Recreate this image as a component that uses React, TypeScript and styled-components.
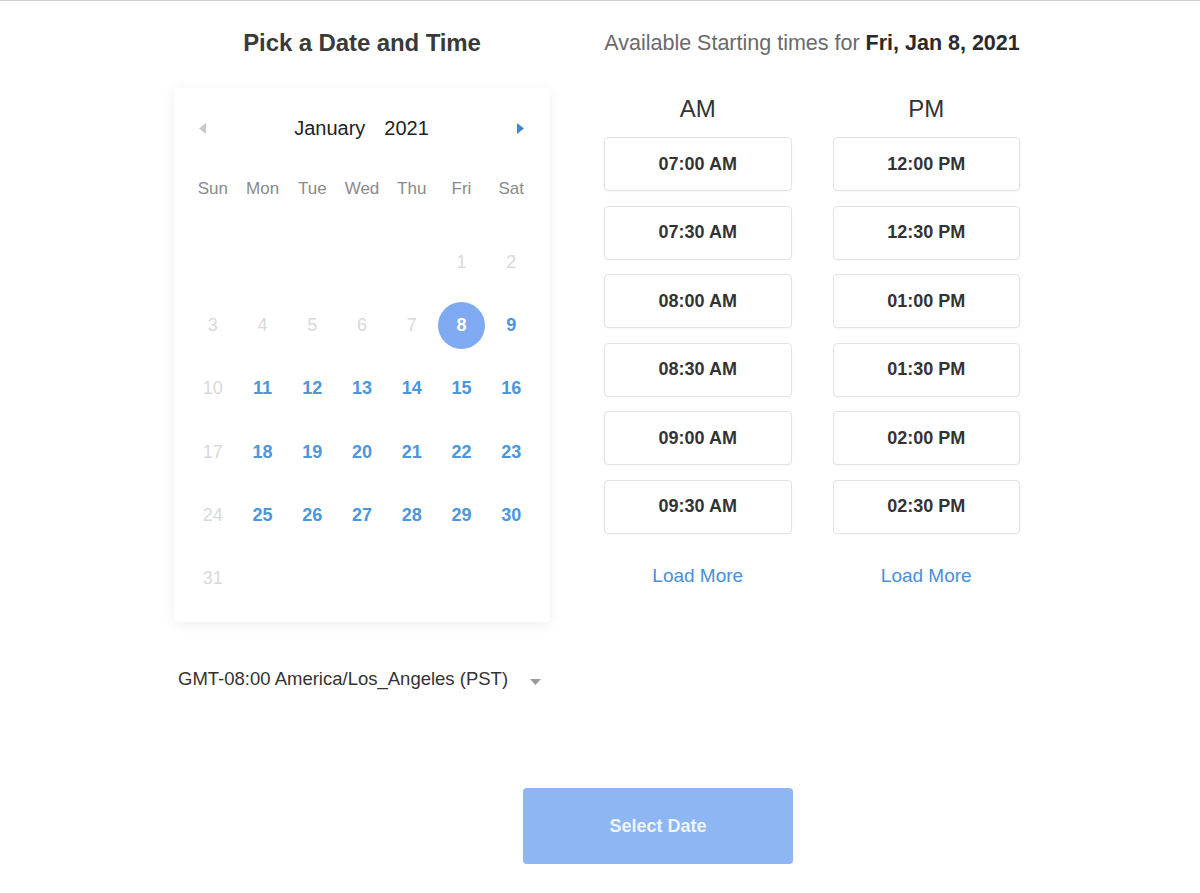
import React from "react";
import styled, { createGlobalStyle } from "styled-components";

const GlobalStyle = createGlobalStyle`
  body {
    margin: 0;
    background: #fff;
    font-family: "Liberation Sans", Arial, sans-serif;
  }
`;

const weekdays = ["Sun", "Mon", "Tue", "Wed", "Thu", "Fri", "Sat"];
const amSlots = ["07:00 AM", "07:30 AM", "08:00 AM", "08:30 AM", "09:00 AM", "09:30 AM"];
const pmSlots = ["12:00 PM", "12:30 PM", "01:00 PM", "01:30 PM", "02:00 PM", "02:30 PM"];

// Jan 2021 starts on a Friday
const leadingBlanks = 5;
const selectedDay = 8;

type DayState = "disabled" | "available" | "selected";

function dayState(day: number): DayState {
  if (day === selectedDay) return "selected";
  const weekday = (leadingBlanks + day - 1) % 7;
  if (day < selectedDay || weekday === 0) return "disabled";
  return "available";
}

export default function App() {
  const cells: (number | null)[] = [];
  for (let i = 0; i < leadingBlanks; i++) cells.push(null);
  for (let d = 1; d <= 31; d++) cells.push(d);

  return (
    <>
      <GlobalStyle />
      <Page>
        <Container>
          <Columns>
            <LeftColumn>
              <Heading>Pick a Date and Time</Heading>
              <CalendarCard>
                <MonthBar>
                  <Arrow $active={false}>
                    <svg width="7" height="11" viewBox="0 0 7 11">
                      <path d="M7 0 L0 5.5 L7 11 Z" fill="currentColor" />
                    </svg>
                  </Arrow>
                  <MonthLabel>
                    <span>January</span>
                    <span>2021</span>
                  </MonthLabel>
                  <Arrow $active>
                    <svg width="7" height="11" viewBox="0 0 7 11">
                      <path d="M0 0 L7 5.5 L0 11 Z" fill="currentColor" />
                    </svg>
                  </Arrow>
                </MonthBar>
                <WeekdayRow>
                  {weekdays.map((w) => (
                    <Weekday key={w}>{w}</Weekday>
                  ))}
                </WeekdayRow>
                <DaysGrid>
                  {cells.map((d, i) =>
                    d === null ? (
                      <DayCell key={"b" + i} />
                    ) : (
                      <DayCell key={d}>
                        <Day $state={dayState(d)}>{d}</Day>
                      </DayCell>
                    )
                  )}
                </DaysGrid>
              </CalendarCard>
              <TimezoneRow>
                <span>GMT-08:00 America/Los_Angeles (PST)</span>
                <svg width="11" height="6" viewBox="0 0 11 6">
                  <path d="M0 0 L11 0 L5.5 6 Z" fill="#9a9a9a" />
                </svg>
              </TimezoneRow>
            </LeftColumn>

            <RightColumn>
              <SubHeading>
                Available Starting times for <strong>Fri, Jan 8, 2021</strong>
              </SubHeading>
              <SlotColumns>
                <SlotColumn>
                  <PeriodLabel>AM</PeriodLabel>
                  <SlotList>
                    {amSlots.map((s) => (
                      <Slot key={s}>{s}</Slot>
                    ))}
                  </SlotList>
                  <LoadMore>Load More</LoadMore>
                </SlotColumn>
                <SlotColumn>
                  <PeriodLabel>PM</PeriodLabel>
                  <SlotList>
                    {pmSlots.map((s) => (
                      <Slot key={s}>{s}</Slot>
                    ))}
                  </SlotList>
                  <LoadMore>Load More</LoadMore>
                </SlotColumn>
              </SlotColumns>
            </RightColumn>
          </Columns>
          <Footer>
            <SelectButton>Select Date</SelectButton>
          </Footer>
        </Container>
      </Page>
    </>
  );
}

const Page = styled.div`
  border-top: 1px solid #cfcfcf;
  min-height: 892px;
  background: #fff;
`;

const Container = styled.div`
  width: 846px;
  padding-right: 6px;
  margin: 0 auto;
  padding-top: 24px;
`;

const Columns = styled.div`
  display: flex;
  gap: 54px;
`;

const LeftColumn = styled.div`
  width: 376px;
  display: flex;
  flex-direction: column;
`;

const RightColumn = styled.div`
  width: 416px;
  display: flex;
  flex-direction: column;
`;

const Heading = styled.h1`
  margin: 0;
  font-size: 24px;
  line-height: 36px;
  font-weight: 700;
  color: #3a3a3a;
  text-align: center;
  letter-spacing: -0.1px;
`;

const SubHeading = styled.h2`
  margin: 0;
  font-size: 21.5px;
  line-height: 36px;
  font-weight: 400;
  color: #6a6a6a;
  text-align: center;
  white-space: nowrap;

  strong {
    color: #2a2a2a;
    font-weight: 700;
  }
`;

const CalendarCard = styled.div`
  margin-top: 27px;
  height: 534px;
  box-sizing: border-box;
  padding: 20px 14px 14px;
  background: #fff;
  border-radius: 3px;
  box-shadow: 0 2px 14px rgba(0, 0, 0, 0.07);
`;

const MonthBar = styled.div`
  height: 40px;
  display: flex;
  align-items: center;
  justify-content: space-between;
  padding: 0 12px 0 11px;
`;

const Arrow = styled.span<{ $active: boolean }>`
  display: flex;
  align-items: center;
  color: ${(p) => (p.$active ? "#3f86d6" : "#c8c8c8")};
`;

const MonthLabel = styled.div`
  display: flex;
  gap: 19px;
  font-size: 20px;
  color: #222;
`;

const WeekdayRow = styled.div`
  margin-top: 21px;
  height: 40px;
  display: grid;
  grid-template-columns: repeat(7, 1fr);
  align-items: center;
`;

const Weekday = styled.div`
  text-align: center;
  font-size: 17px;
  color: #8a8a8a;
`;

const DaysGrid = styled.div`
  margin-top: 22px;
  display: grid;
  grid-template-columns: repeat(7, 1fr);
  grid-auto-rows: 63.2px;
`;

const DayCell = styled.div`
  display: flex;
  align-items: center;
  justify-content: center;
`;

const Day = styled.div<{ $state: DayState }>`
  width: 47px;
  height: 47px;
  border-radius: 50%;
  display: flex;
  align-items: center;
  justify-content: center;
  font-size: 18px;
  font-weight: ${(p) => (p.$state === "disabled" ? 400 : 700)};
  color: ${(p) =>
    p.$state === "disabled" ? "#d9d9d9" : p.$state === "selected" ? "#fff" : "#4b96dc"};
  background: ${(p) => (p.$state === "selected" ? "#7faaf1" : "transparent")};
`;

const TimezoneRow = styled.div`
  margin-top: 42px;
  height: 30px;
  display: flex;
  align-items: center;
  justify-content: space-between;
  padding: 0 9px 0 4px;
  font-size: 18.5px;
  color: #333;

  svg {
    margin-top: 6px;
  }
`;

const SlotColumns = styled.div`
  display: flex;
  gap: 41px;
  margin-top: 27px;
`;

const SlotColumn = styled.div`
  width: 188px;
  display: flex;
  flex-direction: column;
  align-items: stretch;
`;

const PeriodLabel = styled.div`
  height: 42px;
  line-height: 42px;
  text-align: center;
  font-size: 24px;
  color: #333;
`;

const SlotList = styled.div`
  margin-top: 7px;
  display: flex;
  flex-direction: column;
  gap: 14.6px;
`;

const Slot = styled.button`
  height: 54px;
  box-sizing: border-box;
  border: 1px solid #e3e3e3;
  border-radius: 4px;
  background: #fff;
  font-family: "Liberation Sans", Arial, sans-serif;
  font-size: 18px;
  font-weight: 700;
  color: #333;
  cursor: pointer;
  box-shadow: 0 1px 2px rgba(0, 0, 0, 0.03);
`;

const LoadMore = styled.div`
  margin-top: 30px;
  line-height: 24px;
  text-align: center;
  font-size: 19px;
  color: #4a8fd8;
  cursor: pointer;
`;

const Footer = styled.div`
  margin-top: 94px;
  padding-left: 349px;
  display: flex;
`;

const SelectButton = styled.button`
  width: 270px;
  height: 76px;
  border: none;
  border-radius: 4px;
  background: #8db6f3;
  color: #eef4fd;
  font-family: "Liberation Sans", Arial, sans-serif;
  font-size: 18px;
  font-weight: 700;
  cursor: pointer;
`;
